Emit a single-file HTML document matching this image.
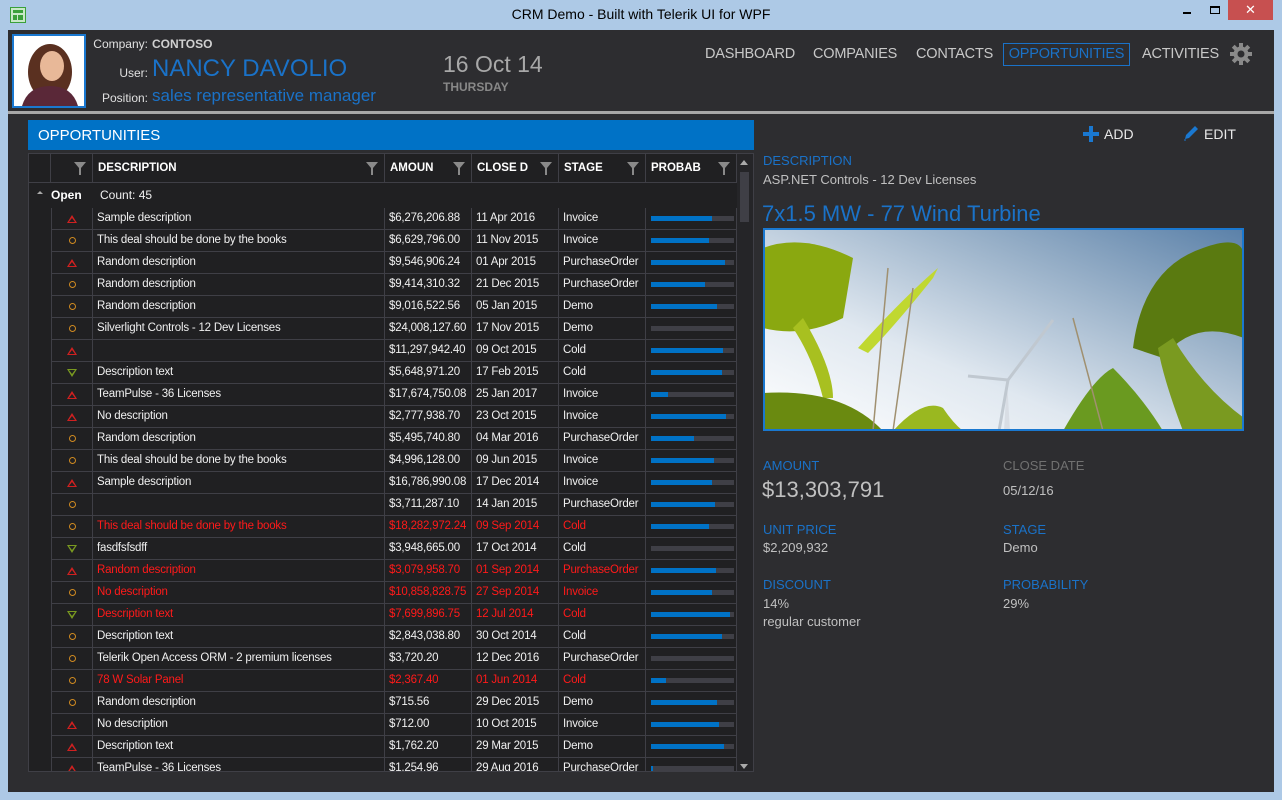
<!DOCTYPE html>
<html><head><meta charset="utf-8">
<style>
*{box-sizing:border-box;margin:0;padding:0}
body{width:1282px;height:800px;background:#adc9e6;font-family:"Liberation Sans",sans-serif;position:relative;overflow:hidden}
.abs{position:absolute}
#win{left:8px;top:30px;width:1266px;height:762px;background:#2d2d30}
.title{left:0;top:6px;width:1282px;text-align:center;font-size:14px;color:#000}
.lbl{color:#e0e0e0;font-size:12px;text-align:right}
.nav{top:46px;font-size:14.5px;color:#c8c8c8;letter-spacing:-0.2px}
#grid{left:28px;top:153px;width:726px;height:619px;background:#202022;border:1px solid #3f3f46;overflow:hidden}
.hdr{position:absolute;top:0;height:29px;border-right:1px solid #3f3f46;border-bottom:1px solid #3f3f46;color:#fff;font-weight:bold;font-size:11.5px;line-height:29px;padding-left:5px;overflow:hidden;white-space:nowrap}
.flt{position:absolute;right:6px;top:8px;width:12px;height:13px}
.row{position:absolute;left:22px;width:686px;height:22px;border-bottom:1px solid #3f3f46;font-size:11.5px;letter-spacing:-0.2px;color:#f0f0f0;line-height:21px}
.row div{position:absolute;top:0;height:22px;border-right:1px solid #3f3f46;padding-left:4px;white-space:nowrap;overflow:hidden;border-left:0}
.c0{left:0;width:42px;border-left:1px solid #3f3f46!important;text-align:center;padding:0!important}
.c1{left:42px;width:292px}
.c2{left:334px;width:87px}
.c3{left:421px;width:87px}
.c4{left:508px;width:87px}
.c5{left:595px;width:91px}
.bar{position:absolute;left:5px;top:8px;width:83px;height:5px;background:#3f3f46}
.bar i{display:block;height:5px;background:#0072c6}
.r{color:#ff1a1a}
.up{display:inline-block;width:0;height:0;margin-top:7px;border-left:5px solid transparent;border-right:5px solid transparent;border-bottom:8px solid #d02020;position:relative}
.up:after{content:"";position:absolute;left:-3px;top:3px;border-left:3px solid transparent;border-right:3px solid transparent;border-bottom:4px solid #202022}
.dn{display:inline-block;width:0;height:0;margin-top:7px;border-left:5px solid transparent;border-right:5px solid transparent;border-top:8px solid #7a9a20;position:relative}
.dn:after{content:"";position:absolute;left:-3px;top:-7px;border-left:3px solid transparent;border-right:3px solid transparent;border-top:4px solid #202022}
.ci{display:inline-block;width:7px;height:7px;border:1.5px solid #d08a20;border-radius:50%;margin-top:7px}
.pl{color:#1a72c8;font-size:13px}
.pv{color:#c0c0c0;font-size:13px}
</style></head><body>
<svg class="abs" style="left:10px;top:7px" width="16" height="16"><rect x="0.5" y="0.5" width="15" height="15" fill="#c8e8c8" stroke="#3aa03a"/><rect x="3" y="3" width="10" height="3" fill="#3aa03a"/><rect x="3" y="8" width="4" height="5" fill="#3aa03a"/><rect x="8" y="8" width="5" height="5" fill="#3aa03a"/></svg>
<div class="abs title">CRM Demo - Built with Telerik UI for WPF</div>
<div class="abs" style="left:1183px;top:12px;width:8px;height:2px;background:#000"></div>
<div class="abs" style="left:1210px;top:6px;width:10px;height:8px;border:1px solid #000;border-top-width:2px"></div>
<div class="abs" style="left:1228px;top:0;width:45px;height:20px;background:#c75050;color:#fff;text-align:center;font-size:13px;line-height:20px">✕</div>

<div id="win" class="abs"></div>
<div class="abs" style="left:12px;top:34px;width:74px;height:74px;border:2px solid #1a78d0;background:#fff;overflow:hidden">
<svg width="70" height="70"><ellipse cx="36" cy="36" rx="22" ry="28" fill="#5a3020"/><ellipse cx="38" cy="30" rx="12" ry="15" fill="#e8b898"/><path d="M8 70 Q14 50 36 50 Q58 50 64 70Z" fill="#5a2838"/></svg>
</div>
<div class="abs lbl" style="left:80px;top:37px;width:68px">Company:</div>
<div class="abs" style="left:152px;top:37px;font-size:12px;color:#d0d0d0;font-weight:bold">CONTOSO</div>
<div class="abs lbl" style="left:80px;top:66px;width:68px">User:</div>
<div class="abs" style="left:152px;top:55px;font-size:24px;color:#1a72c8">NANCY DAVOLIO</div>
<div class="abs lbl" style="left:80px;top:91px;width:68px">Position:</div>
<div class="abs" style="left:152px;top:86px;font-size:17px;color:#1a72c8">sales representative manager</div>
<div class="abs" style="left:443px;top:51px;font-size:23px;color:#a8a8a8">16 Oct 14</div>
<div class="abs" style="left:443px;top:80px;font-size:12px;color:#888;font-weight:bold">THURSDAY</div>
<div class="abs nav" style="left:705px">DASHBOARD</div>
<div class="abs nav" style="left:813px">COMPANIES</div>
<div class="abs nav" style="left:916px">CONTACTS</div>
<div class="abs nav" style="left:1003px;top:43px;width:127px;height:23px;padding-top:2px;text-align:center;border:1px solid #1a72c8;color:#1a72c8">OPPORTUNITIES</div>
<div class="abs nav" style="left:1142px">ACTIVITIES</div>
<svg class="abs" style="left:1230px;top:43px" width="22" height="22" viewBox="0 0 22 22"><g fill="#8a8a8a"><circle cx="11" cy="11" r="7.5"/><g id="t"><rect x="9" y="0" width="4" height="5"/><rect x="9" y="17" width="4" height="5"/></g><use href="#t" transform="rotate(45 11 11)"/><use href="#t" transform="rotate(90 11 11)"/><use href="#t" transform="rotate(135 11 11)"/></g><circle cx="11" cy="11" r="3.5" fill="#2d2d30"/></svg>
<div class="abs" style="left:8px;top:111px;width:1266px;height:3px;background:#a8a8a8"></div>

<div class="abs" style="left:28px;top:120px;width:726px;height:30px;background:#0072c6;color:#fff;font-size:15px;line-height:31px;padding-left:10px">OPPORTUNITIES</div>
<div id="grid" class="abs">
<div class="hdr" style="left:0;width:22px"></div>
<div class="hdr" style="left:22px;width:42px"><svg class="flt" viewBox="0 0 12 13"><path d="M0 0H12L7 6V13H5V6Z" fill="#8a8a8a"/></svg></div>
<div class="hdr" style="left:64px;width:292px">DESCRIPTION<svg class="flt" viewBox="0 0 12 13"><path d="M0 0H12L7 6V13H5V6Z" fill="#8a8a8a"/></svg></div>
<div class="hdr" style="left:356px;width:87px">AMOUN<svg class="flt" viewBox="0 0 12 13"><path d="M0 0H12L7 6V13H5V6Z" fill="#8a8a8a"/></svg></div>
<div class="hdr" style="left:443px;width:87px">CLOSE D<svg class="flt" viewBox="0 0 12 13"><path d="M0 0H12L7 6V13H5V6Z" fill="#8a8a8a"/></svg></div>
<div class="hdr" style="left:530px;width:87px">STAGE<svg class="flt" viewBox="0 0 12 13"><path d="M0 0H12L7 6V13H5V6Z" fill="#8a8a8a"/></svg></div>
<div class="hdr" style="left:617px;width:91px">PROBAB<svg class="flt" viewBox="0 0 12 13"><path d="M0 0H12L7 6V13H5V6Z" fill="#8a8a8a"/></svg></div>
<div class="abs" style="left:708px;top:0;width:17px;height:619px;background:#252528"></div>
<div class="abs" style="left:711px;top:6px;border-left:4px solid transparent;border-right:4px solid transparent;border-bottom:5px solid #aaa"></div>
<div class="abs" style="left:711px;top:610px;border-left:4px solid transparent;border-right:4px solid transparent;border-top:5px solid #aaa"></div>
<div class="abs" style="left:711px;top:18px;width:9px;height:50px;background:#3f3f46"></div>
<div class="abs" style="left:8px;top:37px;border-left:3px solid transparent;border-right:3px solid transparent;border-bottom:3px solid #aaa"></div>
<div class="abs" style="left:22px;top:34px;font-size:12px;color:#fff;font-weight:bold">Open</div>
<div class="abs" style="left:71px;top:34px;font-size:12px;color:#f0f0f0">Count: 45</div>

<div class="row" style="top:54px"><div class="c0"><i class="up"></i></div><div class="c1">Sample description</div><div class="c2">$6,276,206.88</div><div class="c3">11 Apr 2016</div><div class="c4">Invoice</div><div class="c5"><span class="bar"><i style="width:73%"></i></span></div></div>
<div class="row" style="top:76px"><div class="c0"><i class="ci"></i></div><div class="c1">This deal should be done by the books</div><div class="c2">$6,629,796.00</div><div class="c3">11 Nov 2015</div><div class="c4">Invoice</div><div class="c5"><span class="bar"><i style="width:70%"></i></span></div></div>
<div class="row" style="top:98px"><div class="c0"><i class="up"></i></div><div class="c1">Random description</div><div class="c2">$9,546,906.24</div><div class="c3">01 Apr 2015</div><div class="c4">PurchaseOrder</div><div class="c5"><span class="bar"><i style="width:89%"></i></span></div></div>
<div class="row" style="top:120px"><div class="c0"><i class="ci"></i></div><div class="c1">Random description</div><div class="c2">$9,414,310.32</div><div class="c3">21 Dec 2015</div><div class="c4">PurchaseOrder</div><div class="c5"><span class="bar"><i style="width:65%"></i></span></div></div>
<div class="row" style="top:142px"><div class="c0"><i class="ci"></i></div><div class="c1">Random description</div><div class="c2">$9,016,522.56</div><div class="c3">05 Jan 2015</div><div class="c4">Demo</div><div class="c5"><span class="bar"><i style="width:80%"></i></span></div></div>
<div class="row" style="top:164px"><div class="c0"><i class="ci"></i></div><div class="c1">Silverlight Controls - 12 Dev Licenses</div><div class="c2">$24,008,127.60</div><div class="c3">17 Nov 2015</div><div class="c4">Demo</div><div class="c5"><span class="bar"><i style="width:0%"></i></span></div></div>
<div class="row" style="top:186px"><div class="c0"><i class="up"></i></div><div class="c1"></div><div class="c2">$11,297,942.40</div><div class="c3">09 Oct 2015</div><div class="c4">Cold</div><div class="c5"><span class="bar"><i style="width:87%"></i></span></div></div>
<div class="row" style="top:208px"><div class="c0"><i class="dn"></i></div><div class="c1">Description text</div><div class="c2">$5,648,971.20</div><div class="c3">17 Feb 2015</div><div class="c4">Cold</div><div class="c5"><span class="bar"><i style="width:85%"></i></span></div></div>
<div class="row" style="top:230px"><div class="c0"><i class="up"></i></div><div class="c1">TeamPulse - 36 Licenses</div><div class="c2">$17,674,750.08</div><div class="c3">25 Jan 2017</div><div class="c4">Invoice</div><div class="c5"><span class="bar"><i style="width:20%"></i></span></div></div>
<div class="row" style="top:252px"><div class="c0"><i class="up"></i></div><div class="c1">No description</div><div class="c2">$2,777,938.70</div><div class="c3">23 Oct 2015</div><div class="c4">Invoice</div><div class="c5"><span class="bar"><i style="width:90%"></i></span></div></div>
<div class="row" style="top:274px"><div class="c0"><i class="ci"></i></div><div class="c1">Random description</div><div class="c2">$5,495,740.80</div><div class="c3">04 Mar 2016</div><div class="c4">PurchaseOrder</div><div class="c5"><span class="bar"><i style="width:52%"></i></span></div></div>
<div class="row" style="top:296px"><div class="c0"><i class="ci"></i></div><div class="c1">This deal should be done by the books</div><div class="c2">$4,996,128.00</div><div class="c3">09 Jun 2015</div><div class="c4">Invoice</div><div class="c5"><span class="bar"><i style="width:76%"></i></span></div></div>
<div class="row" style="top:318px"><div class="c0"><i class="up"></i></div><div class="c1">Sample description</div><div class="c2">$16,786,990.08</div><div class="c3">17 Dec 2014</div><div class="c4">Invoice</div><div class="c5"><span class="bar"><i style="width:73%"></i></span></div></div>
<div class="row" style="top:340px"><div class="c0"><i class="ci"></i></div><div class="c1"></div><div class="c2">$3,711,287.10</div><div class="c3">14 Jan 2015</div><div class="c4">PurchaseOrder</div><div class="c5"><span class="bar"><i style="width:77%"></i></span></div></div>
<div class="row r" style="top:362px"><div class="c0"><i class="ci"></i></div><div class="c1">This deal should be done by the books</div><div class="c2">$18,282,972.24</div><div class="c3">09 Sep 2014</div><div class="c4">Cold</div><div class="c5"><span class="bar"><i style="width:70%"></i></span></div></div>
<div class="row" style="top:384px"><div class="c0"><i class="dn"></i></div><div class="c1">fasdfsfsdff</div><div class="c2">$3,948,665.00</div><div class="c3">17 Oct 2014</div><div class="c4">Cold</div><div class="c5"><span class="bar"><i style="width:0%"></i></span></div></div>
<div class="row r" style="top:406px"><div class="c0"><i class="up"></i></div><div class="c1">Random description</div><div class="c2">$3,079,958.70</div><div class="c3">01 Sep 2014</div><div class="c4">PurchaseOrder</div><div class="c5"><span class="bar"><i style="width:78%"></i></span></div></div>
<div class="row r" style="top:428px"><div class="c0"><i class="ci"></i></div><div class="c1">No description</div><div class="c2">$10,858,828.75</div><div class="c3">27 Sep 2014</div><div class="c4">Invoice</div><div class="c5"><span class="bar"><i style="width:73%"></i></span></div></div>
<div class="row r" style="top:450px"><div class="c0"><i class="dn"></i></div><div class="c1">Description text</div><div class="c2">$7,699,896.75</div><div class="c3">12 Jul 2014</div><div class="c4">Cold</div><div class="c5"><span class="bar"><i style="width:95%"></i></span></div></div>
<div class="row" style="top:472px"><div class="c0"><i class="ci"></i></div><div class="c1">Description text</div><div class="c2">$2,843,038.80</div><div class="c3">30 Oct 2014</div><div class="c4">Cold</div><div class="c5"><span class="bar"><i style="width:85%"></i></span></div></div>
<div class="row" style="top:494px"><div class="c0"><i class="ci"></i></div><div class="c1">Telerik Open Access ORM - 2 premium licenses</div><div class="c2">$3,720.20</div><div class="c3">12 Dec 2016</div><div class="c4">PurchaseOrder</div><div class="c5"><span class="bar"><i style="width:0%"></i></span></div></div>
<div class="row r" style="top:516px"><div class="c0"><i class="ci"></i></div><div class="c1">78 W Solar Panel</div><div class="c2">$2,367.40</div><div class="c3">01 Jun 2014</div><div class="c4">Cold</div><div class="c5"><span class="bar"><i style="width:18%"></i></span></div></div>
<div class="row" style="top:538px"><div class="c0"><i class="ci"></i></div><div class="c1">Random description</div><div class="c2">$715.56</div><div class="c3">29 Dec 2015</div><div class="c4">Demo</div><div class="c5"><span class="bar"><i style="width:80%"></i></span></div></div>
<div class="row" style="top:560px"><div class="c0"><i class="up"></i></div><div class="c1">No description</div><div class="c2">$712.00</div><div class="c3">10 Oct 2015</div><div class="c4">Invoice</div><div class="c5"><span class="bar"><i style="width:82%"></i></span></div></div>
<div class="row" style="top:582px"><div class="c0"><i class="up"></i></div><div class="c1">Description text</div><div class="c2">$1,762.20</div><div class="c3">29 Mar 2015</div><div class="c4">Demo</div><div class="c5"><span class="bar"><i style="width:88%"></i></span></div></div>
<div class="row" style="top:604px"><div class="c0"><i class="up"></i></div><div class="c1">TeamPulse - 36 Licenses</div><div class="c2">$1,254.96</div><div class="c3">29 Aug 2016</div><div class="c4">PurchaseOrder</div><div class="c5"><span class="bar"><i style="width:3%"></i></span></div></div>
</div>

<svg class="abs" style="left:1083px;top:126px" width="16" height="16"><rect x="6" y="0" width="4" height="16" fill="#1a78d0"/><rect x="0" y="6" width="16" height="4" fill="#1a78d0"/></svg>
<div class="abs" style="left:1104px;top:126px;font-size:14px;color:#e8e8e8">ADD</div>
<svg class="abs" style="left:1183px;top:125px" width="16" height="16"><path d="M2 14 L3 10 L12 1 L15 4 L6 13Z" fill="#1a78d0"/><path d="M1 15 L3 15" stroke="#1a78d0"/></svg>
<div class="abs" style="left:1204px;top:126px;font-size:14px;color:#e8e8e8">EDIT</div>
<div class="abs pl" style="left:763px;top:153px">DESCRIPTION</div>
<div class="abs pv" style="left:763px;top:172px">ASP.NET Controls - 12 Dev Licenses</div>
<div class="abs" style="left:762px;top:201px;font-size:22px;color:#1a72c8">7x1.5 MW - 77 Wind Turbine</div>
<svg class="abs" style="left:763px;top:228px" width="481" height="203" viewBox="0 0 481 203">
<defs><linearGradient id="sky" x1="0" y1="1" x2="1" y2="0"><stop offset="0" stop-color="#ffffff"/><stop offset="0.35" stop-color="#e0e8f0"/><stop offset="0.7" stop-color="#98b0c8"/><stop offset="1" stop-color="#5a80a8"/></linearGradient></defs>
<rect width="481" height="203" fill="url(#sky)"/>
<path d="M241 203 L244 152 L247 203Z" fill="#d8dde4"/><path d="M245 152 L290 92 M245 152 L205 148 M245 152 L233 220" stroke="#c0c8d0" stroke-width="3"/>
<path d="M0 20 Q40 5 90 30 L80 90 Q40 110 0 100Z" fill="#8aa810"/>
<path d="M40 90 Q70 140 70 170 L60 170 Q50 130 30 100Z" fill="#a8c020"/>
<path d="M0 165 Q80 160 120 203 L0 203Z" fill="#6a8a10"/>
<path d="M95 120 Q140 70 175 40 L170 50 Q130 100 105 125Z" fill="#c0d830"/>
<path d="M370 120 Q380 40 440 20 Q481 5 481 30 L481 110 Q430 90 400 130Z" fill="#5a7a10"/>
<path d="M410 110 Q440 160 481 190 L481 203 L420 203 Q400 150 395 120Z" fill="#7a9a20"/>
<path d="M300 203 Q330 150 350 140 Q380 170 400 203Z" fill="#6a9a20"/>
<path d="M130 203 Q160 170 180 180 Q190 195 200 203Z" fill="#9ab820"/>
<path d="M310 90 L340 203 M150 60 L130 203 M125 40 L110 203" stroke="#a09070" stroke-width="1.5"/>
<rect x="1" y="1" width="479" height="201" fill="none" stroke="#1a78d0" stroke-width="2"/>
</svg>
<div class="abs pl" style="left:763px;top:458px">AMOUNT</div>
<div class="abs" style="left:762px;top:477px;font-size:22px;color:#c0c0c0">$13,303,791</div>
<div class="abs" style="left:1003px;top:458px;font-size:13px;color:#707070">CLOSE DATE</div>
<div class="abs pv" style="left:1003px;top:483px">05/12/16</div>
<div class="abs pl" style="left:763px;top:522px">UNIT PRICE</div>
<div class="abs pv" style="left:763px;top:540px">$2,209,932</div>
<div class="abs pl" style="left:1003px;top:522px">STAGE</div>
<div class="abs pv" style="left:1003px;top:540px">Demo</div>
<div class="abs pl" style="left:763px;top:577px">DISCOUNT</div>
<div class="abs pv" style="left:763px;top:596px">14%</div>
<div class="abs pv" style="left:763px;top:614px">regular customer</div>
<div class="abs pl" style="left:1003px;top:577px">PROBABILITY</div>
<div class="abs pv" style="left:1003px;top:596px">29%</div>
</body></html>
